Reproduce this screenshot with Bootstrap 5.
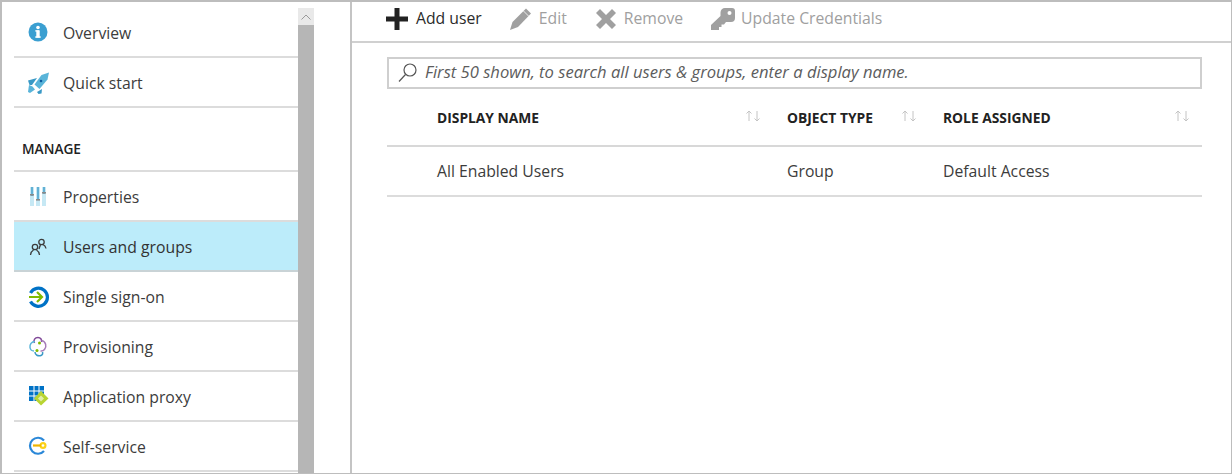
<!DOCTYPE html>
<html lang="en">
<head>
<meta charset="UTF-8">
<title>Users and groups</title>
<link href="https://cdn.jsdelivr.net/npm/bootstrap@5.3.0/dist/css/bootstrap.min.css" rel="stylesheet">
<style>
html, body { height: 100%; }
body { font-family: "Open Sans", "Noto Sans", sans-serif; font-size: 15.75px; color: #3c3c3c; background: #fff; overflow: hidden; }
.shot-frame { width: 1232px; height: 474px; border: 1px solid #bdbdbd; border-width: 2px 1px 1px 2px; overflow: hidden; }
.side-wrap { width: 350px; height: 100%; padding: 6px 0 0 12px; border-right: 2px solid #c4c4c4; flex: none; }
.side-list { width: 284px; flex: none; }
.side-item { height: 50px; border-bottom: 2px solid #dcdcdc; padding: 4px 0 0 49px; position: relative; }
.side-item svg { position: absolute; left: 12px; top: 13px; }
.side-item.is-active { background: #bcecfa; border-bottom-color: #c9d3d6; color: #333; }
.side-head { height: 64px; border-bottom: 2px solid #dcdcdc; padding: 31px 0 0 8px; font-size: 13.7px; font-weight: 600; color: #222; line-height: 20px; }
.fake-scroll { width: 16px; flex: none; background: #b6b6b6; height: 480px; }
.fake-scroll-up { height: 17px; background: #e9e9e9; }
.tool-bar { height: 41px; border-bottom: 2px solid #d0d0d0; padding: 0 0 6px 34px; color: #a0a0a0; }
.tool-btn { height: 100%; white-space: nowrap; }
.tool-btn.is-on { color: #2b2b2b; }
.tool-gap-a { margin-left: 28px; }
.tool-gap-b { margin-left: 29px; }
.tool-gap-c { margin-left: 28px; }
.key-mark { margin-right: 6px; }
.body-pane { padding: 14px 29px 0 35px; }
.search-box { height: 32px; border: 2px solid #cfcfcf; padding: 0 0 1px 9px; font-style: italic; color: #5c5c5c; font-size: 16.6px; white-space: nowrap; }
.user-grid { margin: 0; table-layout: fixed; width: 815px; }
.user-grid th { height: 57px; border-bottom: 2px solid #d8d8d8; font-size: 13.8px; font-weight: 700; color: #222; vertical-align: middle; padding: 2px 16px 0 10px; }
.user-grid th.last-col { padding-right: 12px; }
.user-grid td { height: 50px; border-bottom: 2px solid #dcdcdc; color: #3c3c3c; vertical-align: middle; padding: 2px 0 0 10px; }
.user-grid .name-col { padding-left: 50px; }
.col-name { width: 390px; }
.col-type { width: 156px; }
.sort-mark { margin-top: -4px; flex: none; }
</style>
</head>
<body>
<div class="shot-frame d-flex">
  <!-- left menu -->
  <div class="side-wrap d-flex">
    <div class="side-list">
      <div class="side-item d-flex align-items-center">
        <svg width="24" height="24" viewBox="0 0 24 24"><circle cx="12" cy="11" r="9.500" fill="#3b9fd1"/><rect x="10.300" y="9.500" width="3.400" height="7" fill="#fff"/><rect x="9.300" y="15.300" width="5.400" height="1.500" fill="#fff"/><rect x="9.300" y="9.200" width="4" height="1.400" fill="#fff"/><circle cx="12" cy="6.500" r="1.800" fill="#fff"/></svg>
        Overview
      </div>
      <div class="side-item d-flex align-items-center">
        <svg width="24" height="24" viewBox="0 0 24 24"><path d="M23 1.500l-1.500 7-8 9.500-5-4.500 7-9.500z" fill="#59b4d9"/><path d="M2 9.500l9-2.500-5 7-2.500 0z" fill="#3999c6"/><path d="M3 14l3.500 1.500 2.500 3-5 3.500-2-1z" fill="#59b4d9"/><path d="M11 21l5-3-.5 4.500-3 .5z" fill="#3999c6"/><circle cx="15" cy="10" r="1.300" fill="#0b5a9e"/></svg>
        Quick start
      </div>
      <div class="side-head">MANAGE</div>
      <div class="side-item d-flex align-items-center">
        <svg width="24" height="24" viewBox="0 0 24 24"><rect x="4" y="2" width="4" height="19" fill="#c6e8f4"/><rect x="10" y="2" width="4" height="19" fill="#c6e8f4"/><rect x="16" y="2" width="4" height="19" fill="#c6e8f4"/><rect x="5.300" y="2" width="1.400" height="9" fill="#3999c6"/><rect x="11.300" y="2" width="1.400" height="13" fill="#3999c6"/><rect x="17.300" y="2" width="1.400" height="7" fill="#3999c6"/><rect x="4" y="9" width="4" height="1.600" fill="#8a8a8a"/><rect x="10" y="14" width="4" height="1.600" fill="#8a8a8a"/><rect x="16" y="7" width="4" height="1.600" fill="#8a8a8a"/></svg>
        Properties
      </div>
      <div class="side-item is-active d-flex align-items-center">
        <svg width="24" height="24" viewBox="0 0 24 24" fill="none" stroke="#3c3c3c" stroke-width="1.300"><circle cx="9" cy="12" r="2.700"/><path d="M4.500 20c.3-2.500 1.500-4.200 3-5M13.500 20c-.3-2.500-1.500-4.200-3-5"/><circle cx="15.500" cy="7" r="2.700"/><path d="M13 14c.5-2 1-3.300 1.500-4M20 13.500c-.3-2-1.200-3.100-3-4"/></svg>
        Users and groups
      </div>
      <div class="side-item d-flex align-items-center">
        <svg width="24" height="24" viewBox="0 0 24 24" fill="none"><path d="M4.500 8A9 9 0 1 1 4.500 16.500" stroke="#0072c6" stroke-width="3.200"/><path d="M3 12h13M11 7l5 5-5 5" stroke="#7fba00" stroke-width="2.200"/></svg>
        Single sign-on
      </div>
      <div class="side-item d-flex align-items-center">
        <svg width="24" height="24" viewBox="0 0 24 24" fill="none" stroke-width="1.500"><path d="M8.500 8C7 5 9 2.500 12 2.500c2.500 0 4 2 3.500 4.500" stroke="#804998"/><path d="M15.500 5.500c4.500 1 5.500 6 3 9-1 1.200-2.500 1.700-4 1.500" stroke="#a67db8"/><path d="M9 6.500c-3.500 0-5.500 3-5 6 .3 2 2 3.500 4 3.500" stroke="#59b4d9"/><path d="M9 17c0 3 3 4.500 6 3.500 1.500-.5 2-2 1.500-3.500" stroke="#3999c6"/><circle cx="13.500" cy="8" r="1.500" fill="#7fba00" stroke="none"/><circle cx="11" cy="15.500" r="1.500" fill="#7fba00" stroke="none"/></svg>
        Provisioning
      </div>
      <div class="side-item d-flex align-items-center">
        <svg width="24" height="24" viewBox="0 0 24 24"><rect x="3" y="1" width="15" height="15" fill="#0072c6"/><path d="M8 1v15M13 1v15M3 6h15M3 11h15" stroke="#fff"/><path d="M15 6l7.500 7.500L15 20.500l-7-7z" fill="#b8d432"/><path d="M15 10.500l3 3-3 3-3-3z" fill="#e2eea8"/></svg>
        Application proxy
      </div>
      <div class="side-item d-flex align-items-center">
        <svg width="24" height="24" viewBox="0 0 24 24" fill="none"><path d="M18 5.500A8 8 0 1 0 18 16" stroke="#2b88d8" stroke-width="2.200"/><circle cx="17" cy="10.500" r="3.500" fill="#fcd116"/><circle cx="17" cy="10.500" r="1.300" fill="#fff"/><path d="M7 10.500h8" stroke="#f0b400" stroke-width="2.200"/></svg>
        Self-service
      </div>
    </div>
    <div class="fake-scroll">
      <div class="fake-scroll-up d-flex align-items-center justify-content-center">
        <svg width="10" height="6" viewBox="0 0 10 6" fill="none"><path d="M.5 5.500L5 1l4.500 4.500" stroke="#9a9a9a"/></svg>
      </div>
    </div>
  </div>

  <!-- main area -->
  <div class="flex-grow-1 d-flex flex-column">
    <div class="tool-bar d-flex align-items-center">
      <div class="tool-btn is-on d-flex align-items-center">
        <svg class="me-2" width="22" height="22" viewBox="0 0 22 22"><path d="M8.500 0h5v8.500H22v5h-8.500V22h-5v-8.500H0v-5h8.500z" fill="#222"/></svg>Add user
      </div>
      <div class="tool-btn tool-gap-a d-flex align-items-center">
        <svg class="me-2" width="21" height="22" viewBox="0 0 21 22"><path d="M16 .5l5 5L8 19 0 22l2.500-8z" fill="#a0a0a0"/><path d="M13.500 3l5 5" stroke="#fff" stroke-width=".8"/></svg>Edit
      </div>
      <div class="tool-btn tool-gap-b d-flex align-items-center">
        <svg class="me-2" width="20" height="20" viewBox="0 0 20 20"><path d="M4 0l6 6 6-6 4 4-6 6 6 6-4 4-6-6-6 6-4-4 6-6-6-6z" fill="#a0a0a0"/></svg>Remove
      </div>
      <div class="tool-btn tool-gap-c d-flex align-items-center">
        <svg class="key-mark" width="24" height="22" viewBox="0 0 24 22"><path d="M14 0h7a3 3 0 0 1 3 3v7a4 4 0 0 1-4 4h-5l-2 2.500h-2.500V19H8v3H0v-5L9.500 8V4.500A4.500 4.500 0 0 1 14 0z" fill="#a0a0a0"/><circle cx="18.500" cy="5" r="2" fill="#fff"/></svg>Update Credentials
      </div>
    </div>
    <div class="body-pane">
      <div class="search-box d-flex align-items-center">
        <svg class="me-2" width="19" height="20" viewBox="0 0 19 20" fill="none" stroke="#555" stroke-width="1.200"><circle cx="12" cy="7" r="6"/><path d="M7.500 11.500L1 18.500"/></svg>First 50 shown, to search all users &amp; groups, enter a display name.
      </div>
      <table class="table table-borderless user-grid">
        <colgroup><col class="col-name"><col class="col-type"><col></colgroup>
        <thead>
          <tr>
            <th class="name-col"><div class="d-flex justify-content-between align-items-center">DISPLAY NAME
              <svg class="sort-mark" width="16" height="12" viewBox="0 0 16 12" fill="none" stroke="#c4c4c4"><path d="M4 11V1M1.500 3.500L4 1l2.500 2.500M12 1v10M9.500 8.500L12 11l2.500-2.500"/></svg></div></th>
            <th><div class="d-flex justify-content-between align-items-center">OBJECT TYPE
              <svg class="sort-mark" width="16" height="12" viewBox="0 0 16 12" fill="none" stroke="#c4c4c4"><path d="M4 11V1M1.500 3.500L4 1l2.500 2.500M12 1v10M9.500 8.500L12 11l2.500-2.500"/></svg></div></th>
            <th class="last-col"><div class="d-flex justify-content-between align-items-center">ROLE ASSIGNED
              <svg class="sort-mark" width="16" height="12" viewBox="0 0 16 12" fill="none" stroke="#c4c4c4"><path d="M4 11V1M1.500 3.500L4 1l2.500 2.500M12 1v10M9.500 8.500L12 11l2.500-2.500"/></svg></div></th>
          </tr>
        </thead>
        <tbody>
          <tr><td class="name-col">All Enabled Users</td><td>Group</td><td>Default Access</td></tr>
        </tbody>
      </table>
    </div>
  </div>
</div>
<script src="https://cdn.jsdelivr.net/npm/bootstrap@5.3.0/dist/js/bootstrap.bundle.min.js"></script>
</body>
</html>
